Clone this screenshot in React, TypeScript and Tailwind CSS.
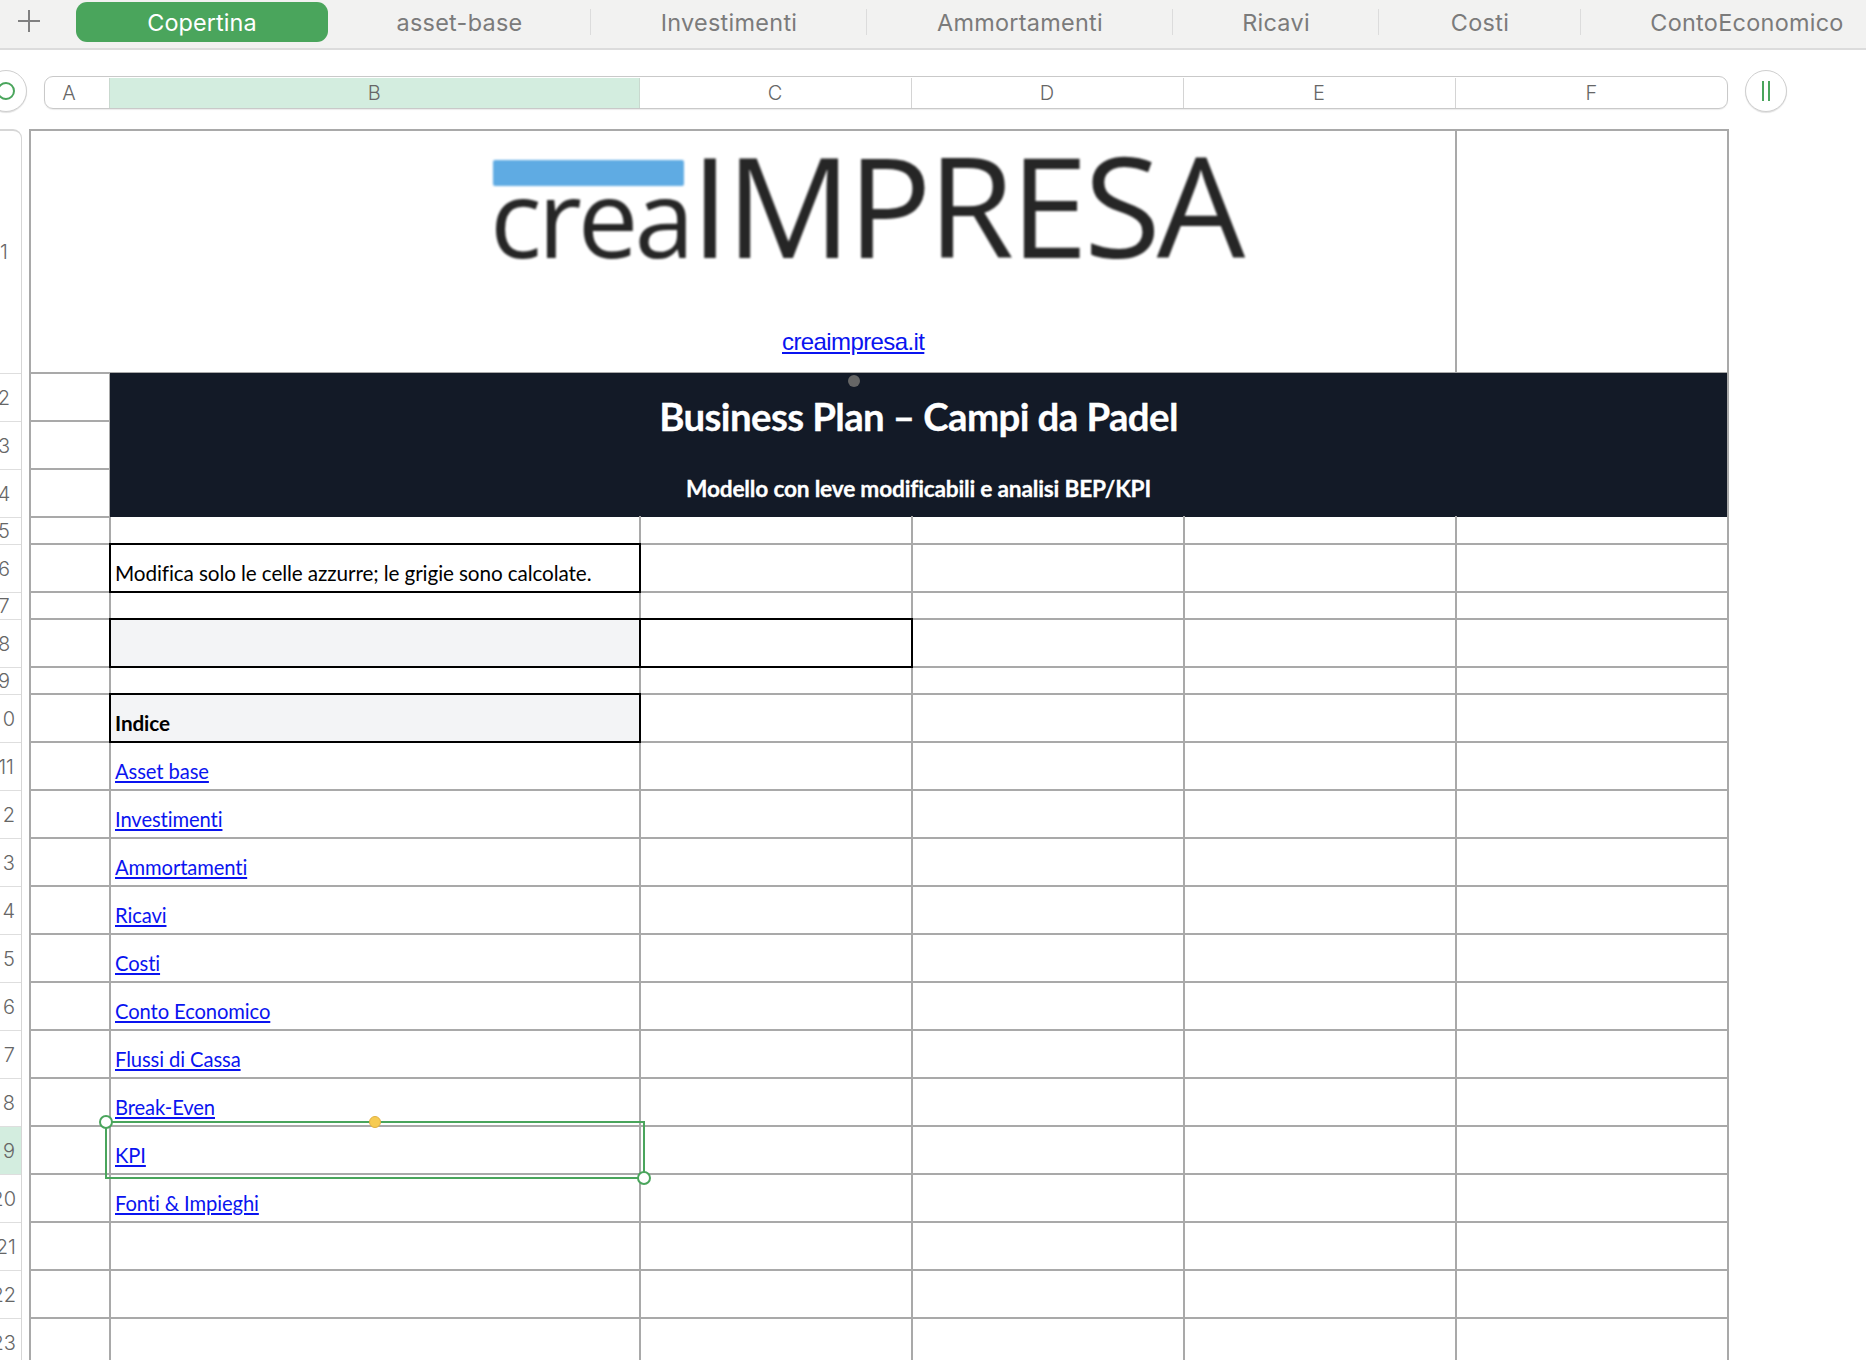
import React from "react";

const ROWS =
  "grid-rows-[243px_48px_48px_48px_27px_48px_27px_48px_27px_48px_48px_48px_48px_48px_48px_48px_48px_48px_48px_48px_48px_48px_48px]";
const COLS = "grid-cols-[80px_530px_272px_272px_272px_272px]";
const LINE = "border-r-2 border-b-2 border-[#a9a9a9]";
const CELL_TEXT = "font-['Lato',sans-serif] text-[20.7px] leading-none tracking-[-0.1px]";

const tabs = [
  { label: "asset-base", w: "w-[263px]", sep: true },
  { label: "Investimenti", w: "w-[276px]", sep: true },
  { label: "Ammortamenti", w: "w-[306px]", sep: true },
  { label: "Ricavi", w: "w-[206px]", sep: true },
  { label: "Costi", w: "w-[202px]", sep: true },
  { label: "ContoEconomico", w: "w-[332px]", sep: false },
];

const links = [
  "Asset base",
  "Investimenti",
  "Ammortamenti",
  "Ricavi",
  "Costi",
  "Conto Economico",
  "Flussi di Cassa",
  "Break-Even",
  "KPI",
  "Fonti & Impieghi",
  "",
  "",
  "",
];

function Blank({ top = false }: { top?: boolean }) {
  return <div className={`${LINE} ${top ? "relative z-20 -mt-[2px]" : ""}`} />;
}

function Row({ a = true, children }: { a?: boolean; children?: React.ReactNode }) {
  return (
    <>
      {a && <Blank />}
      {children}
      <Blank />
      <Blank />
      <Blank />
      <Blank />
    </>
  );
}

function rowLabelClass(n: number) {
  if (n < 10) return "justify-center";
  if (n === 11) return "justify-end pr-[7px]";
  if (n >= 20) return "justify-end pr-[5px]";
  return "justify-end pr-[3px] tracking-[3px]";
}

export default function App() {
  return (
    <div className="h-[1360px] w-full overflow-hidden bg-white font-['Inter',sans-serif]">
      {/* sheet tabs */}
      <div className="flex h-[50px] border-b-2 border-[#dcdcdc] bg-[#f2f2f1]">
        <div className="flex w-[76px] shrink-0 items-start justify-center pt-[10px] pr-[18px]">
          <svg width="22" height="22" viewBox="0 0 22 22" fill="none" stroke="#808080" strokeWidth="2">
            <path d="M11 0v22M0 11h22" />
          </svg>
        </div>
        <div className="mt-[2px] flex h-[40px] w-[252px] shrink-0 items-center justify-center rounded-[11px] bg-[#4aa55c] pt-[1px] text-[23.4px] tracking-[0.1px] text-white">
          Copertina
        </div>
        {tabs.map((t) => (
          <div key={t.label} className={`relative mt-[2px] flex h-[40px] shrink-0 items-center justify-center pt-[1px] text-[23.4px] tracking-[0.3px] text-[#7b7b7b] ${t.w}`}>
            {t.label}
            {t.sep && <span className="absolute top-[7px] right-0 h-[26px] w-[1.5px] bg-[#dcdcdc]" />}
          </div>
        ))}
      </div>

      {/* column headers */}
      <div className="flex h-[79px] pt-[20px]">
        <div className="-ml-[15px] flex h-[42px] w-[42px] shrink-0 items-center justify-center rounded-full border-[1.5px] border-[#cfcfcf] bg-white shadow-[0_1px_1px_rgba(0,0,0,0.12)]">
          <span className="block h-[18px] w-[18px] rounded-full border-2 border-[#4aa55c]" />
        </div>
        <div className="mt-[6px] ml-[17px] flex h-[33px] w-[1684px] shrink-0 overflow-hidden rounded-[9px] border-[1.5px] border-[#c9c9c9] pt-[1px] text-[20px] font-light text-[#666666] shadow-[0_1px_1px_rgba(0,0,0,0.08)]">
          <div className="flex w-[64px] shrink-0 items-center justify-center pr-[16px]">A</div>
          <div className="flex w-[530.5px] shrink-0 items-center justify-center border-x border-[#c9d9cf] bg-[#d3eddf]">B</div>
          <div className="flex w-[272px] shrink-0 items-center justify-center border-r border-[#d4d4d4]">C</div>
          <div className="flex w-[272px] shrink-0 items-center justify-center border-r border-[#d4d4d4]">D</div>
          <div className="flex w-[272px] shrink-0 items-center justify-center border-r border-[#d4d4d4]">E</div>
          <div className="flex w-[272px] shrink-0 items-center justify-center">F</div>
        </div>
        <div className="ml-[17px] flex h-[42px] w-[42px] shrink-0 items-center justify-center gap-[4px] rounded-full border-[1.5px] border-[#cfcfcf] bg-white shadow-[0_1px_1px_rgba(0,0,0,0.12)]">
          <span className="block h-[20px] w-[2px] bg-[#4aa55c]" />
          <span className="block h-[20px] w-[2px] bg-[#4aa55c]" />
        </div>
      </div>

      <div className="flex items-start">
        {/* row headers */}
        <div className={`-ml-[13px] mr-[7px] grid w-[35px] shrink-0 rounded-tr-[9px] border-t-2 border-r-[1.5px] border-[#d6d6d6] text-[20px] font-light text-[#666666] ${ROWS}`}>
          {Array.from({ length: 23 }, (_, i) => (
            <div
              key={i}
              className={`flex items-center border-b-[1.5px] border-[#dedede] ${i === 18 ? "bg-[#d3eddf]" : ""} ${rowLabelClass(i + 1)}`}
            >
              {i + 1}
            </div>
          ))}
        </div>

        {/* sheet */}
        <div className={`relative grid w-[1700px] shrink-0 border-t-2 border-l-2 border-[#a9a9a9] text-black ${COLS} ${ROWS} ${CELL_TEXT}`}>
          {/* row 1 */}
          <div className={`col-span-5 flex flex-col pl-[462px] ${LINE}`}>
            <div className="relative flex h-[170px] items-baseline pt-[4px] font-['Open_Sans',sans-serif] font-normal text-[#262626] blur-[0.8px]">
              <span className="absolute top-[29px] left-0 h-[26px] w-[191px] rounded-[2px] bg-[#5fabe3]" />
              <span className="-ml-[3px] text-[108px] leading-[138px] tracking-[-4px]">crea</span>
              <span className="text-[140px] leading-[138px] tracking-[-4px]">IMPRESA</span>
            </div>
            <a className="mt-[27px] ml-[289px] w-fit font-['Liberation_Sans',sans-serif] text-[24px] leading-[28px] tracking-[-0.6px] text-[#0a14f0] underline underline-offset-2">
              creaimpresa.it
            </a>
          </div>
          <Blank />

          {/* rows 2-4 */}
          <Blank />
          <div className="relative z-10 col-span-5 row-span-3 -mt-px -ml-px mb-px flex flex-col items-center border-r-2 border-[#a9a9a9] bg-[#131a27] font-bold text-white [-webkit-text-stroke:0.3px_white]">
            <span className="absolute top-[2px] left-[738px] h-[12px] w-[12px] rounded-full bg-[#666666]" />
            <div className="mt-[23px] text-[38.4px] leading-[40px] tracking-[-0.6px]">Business Plan – Campi da Padel</div>
            <div className="mt-[40px] text-[22.7px] leading-[26px] tracking-[-0.2px]">Modello con leve modificabili e analisi BEP/KPI</div>
          </div>
          <Blank />
          <Blank />

          {/* row 5 */}
          <Blank />
          <Blank top />
          <Blank top />
          <Blank top />
          <Blank top />
          <Blank top />

          {/* row 6 */}
          <Row>
            <div className="relative z-[25] -mt-[2px] -ml-[2px] flex items-end border-2 border-black pb-[7px] pl-[4px]">
              Modifica solo le celle azzurre; le grigie sono calcolate.
            </div>
          </Row>
          {/* row 7 */}
          <Row>
            <Blank />
          </Row>
          {/* row 8 */}
          <Blank />
          <div className="relative z-[1] -mt-[2px] -ml-[2px] border-2 border-black bg-[#f3f4f6]" />
          <div className="relative z-[1] -mt-[2px] -ml-[2px] border-2 border-l-0 border-black" />
          <Blank />
          <Blank />
          <Blank />
          {/* row 9 */}
          <Row>
            <Blank />
          </Row>
          {/* row 10 */}
          <Row>
            <div className="relative z-[1] -mt-[2px] -ml-[2px] flex items-end border-2 border-black bg-[#f3f4f6] pb-[7px] pl-[4px] font-bold">
              Indice
            </div>
          </Row>

          {/* rows 11-23 */}
          {links.map((l, i) => (
            <Row key={i}>
              <div className={`flex items-end pb-[8px] pl-[4px] text-[20.2px] ${LINE}`}>
                {l && <a className="text-[#0a14f0] underline">{l}</a>}
              </div>
            </Row>
          ))}

          {/* selection */}
          <div className="absolute top-[990px] left-[74px] z-30 h-[58px] w-[540px] border-2 border-[#4aa55c]">
            <span className="absolute -top-[8px] -left-[8px] h-[14px] w-[14px] rounded-full border-2 border-[#4aa55c] bg-white" />
            <span className="absolute -top-[7px] left-[262px] h-[12px] w-[12px] rounded-full border border-[#e0b040] bg-[#f6cb52]" />
            <span className="absolute -right-[8px] -bottom-[8px] h-[14px] w-[14px] rounded-full border-2 border-[#4aa55c] bg-white" />
          </div>
        </div>
      </div>
    </div>
  );
}
